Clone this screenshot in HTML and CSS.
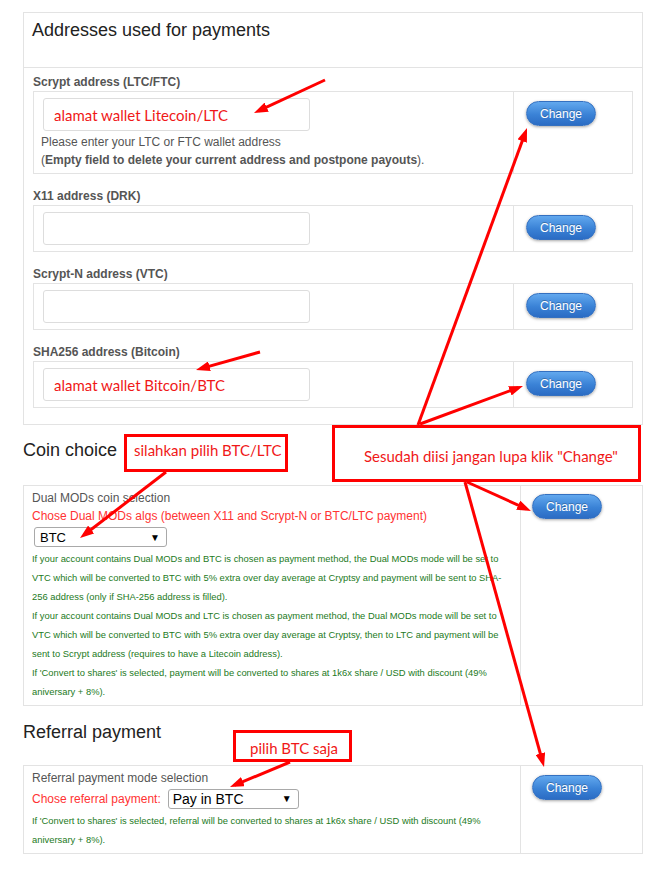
FILE: index.html
```html
<!DOCTYPE html>
<html lang="en">
<head>
    <meta charset="UTF-8">
    <title>Payment settings</title>
    <link rel="stylesheet" href="styles.css">
</head>
<body>
<div class="page">
    <div class="panel">
        <div class="panel-head"><h2>Addresses used for payments</h2></div>
        <div class="panel-body">
            <div class="addr-label">Scrypt address (LTC/FTC)</div>
            <div class="addr-row">
                <div class="addr-main">
                    <div class="addr-input"><span class="note-text">alamat wallet Litecoin/LTC</span></div>
                    <p class="addr-help">Please enter your LTC or FTC wallet address<br>(<b>Empty field to delete your current address and postpone payouts</b>).</p>
                </div>
                <div class="addr-side"><button class="btn-change">Change</button></div>
            </div>

            <div class="addr-label">X11 address (DRK)</div>
            <div class="addr-row">
                <div class="addr-main"><div class="addr-input"></div></div>
                <div class="addr-side"><button class="btn-change">Change</button></div>
            </div>

            <div class="addr-label">Scrypt-N address (VTC)</div>
            <div class="addr-row">
                <div class="addr-main"><div class="addr-input"></div></div>
                <div class="addr-side"><button class="btn-change">Change</button></div>
            </div>

            <div class="addr-label">SHA256 address (Bitcoin)</div>
            <div class="addr-row">
                <div class="addr-main"><div class="addr-input"><span class="note-text">alamat wallet Bitcoin/BTC</span></div></div>
                <div class="addr-side"><button class="btn-change">Change</button></div>
            </div>
        </div>
    </div>

    <h2 class="section-title">Coin choice</h2>
    <div class="choice-box">
        <div class="choice-main">
            <div class="choice-title">Dual MODs coin selection</div>
            <div class="choice-red">Chose Dual MODs algs (between X11 and Scrypt-N or BTC/LTC payment)</div>
            <div class="select select-coin"><span>BTC</span><span class="select-arrow">&#9660;</span></div>
            <div class="choice-notes">
                <p>If your account contains Dual MODs and BTC is chosen as payment method, the Dual MODs mode will be set to VTC which will be converted to BTC with 5% extra over day average at Cryptsy and payment will be sent to SHA-256 address (only if SHA-256 address is filled).</p>
                <p>If your account contains Dual MODs and LTC is chosen as payment method, the Dual MODs mode will be set to VTC which will be converted to BTC with 5% extra over day average at Cryptsy, then to LTC and payment will be sent to Scrypt address (requires to have a Litecoin address).</p>
                <p>If 'Convert to shares' is selected, payment will be converted to shares at 1k6x share / USD with discount (49% aniversary + 8%).</p>
            </div>
        </div>
        <div class="choice-side"><button class="btn-change">Change</button></div>
    </div>

    <h2 class="section-title section-ref">Referral payment</h2>
    <div class="choice-box">
        <div class="choice-main">
            <div class="choice-title">Referral payment mode selection</div>
            <div class="ref-row">
                <span class="choice-red">Chose referral payment:</span>
                <div class="select select-ref"><span>Pay in BTC</span><span class="select-arrow">&#9660;</span></div>
            </div>
            <div class="choice-notes ref-notes">
                <p>If 'Convert to shares' is selected, referral will be converted to shares at 1k6x share / USD with discount (49% aniversary + 8%).</p>
            </div>
        </div>
        <div class="choice-side ref-side"><button class="btn-change">Change</button></div>
    </div>

    <!-- red annotations drawn over the page -->
    <svg class="arrows" width="664" height="869" viewBox="0 0 664 869">
        <defs>
            <marker id="head" viewBox="0 0 14 10" refX="9" refY="5" markerWidth="14" markerHeight="10" orient="auto" markerUnits="userSpaceOnUse">
                <path d="M0 0 L14 5 L0 10 Z" fill="#f00"/>
            </marker>
        </defs>
        <g stroke="#f00" stroke-width="3" marker-end="url(#head)">
            <line x1="325" y1="80" x2="258.5" y2="110.9"/>
            <line x1="260" y1="352" x2="200.8" y2="368.6"/>
            <line x1="166" y1="472" x2="84" y2="535"/>
            <line x1="418" y1="425" x2="525.3" y2="132.7"/>
            <line x1="420" y1="424" x2="518.3" y2="387.7"/>
            <line x1="467" y1="482" x2="526.4" y2="508.9"/>
            <line x1="465" y1="482" x2="542.7" y2="762.2"/>
            <line x1="290" y1="762" x2="234.6" y2="785.1"/>
        </g>
    </svg>
    <div class="note-box note-coin">silahkan pilih BTC/LTC</div>
    <div class="note-box note-change">Sesudah diisi jangan lupa klik "Change"</div>
    <div class="note-box note-ref">pilih BTC saja</div>
</div>
</body>
</html>
```

FILE: styles.css
```css
body {
    margin: 0;
    font-family: "Liberation Sans", Arial, sans-serif;
    background: #fff;
    color: #333;
}
.page {
    position: relative;
    width: 664px;
    height: 869px;
    padding: 12px 21px 0 23px;
    box-sizing: border-box;
    overflow: hidden;
}

/* addresses panel */
.panel {
    border: 1px solid #e3e3e3;
}
.panel-head {
    height: 55px;
    box-sizing: border-box;
    padding: 7px 8px 0;
    border-bottom: 1px solid #e3e3e3;
}
.panel-head h2 {
    margin: 0;
    font-size: 18px;
    line-height: 20px;
    font-weight: normal;
    color: #222;
}
.panel-body {
    padding: 5px 9px 16px;
}
.addr-label {
    margin-top: 13px;
    font-size: 12px;
    line-height: 18px;
    font-weight: bold;
    color: #555;
}
.addr-label:first-child {
    margin-top: 0;
}
.addr-row {
    display: flex;
    border: 1px solid #e3e3e3;
}
.addr-main {
    flex: 1;
    padding: 6px 9px;
}
.addr-input {
    width: 267px;
    height: 33px;
    box-sizing: border-box;
    border: 1px solid #ddd;
    border-radius: 3px;
    padding: 0 10px;
    display: flex;
    align-items: center;
}
.note-text {
    font-family: Lato, "Open Sans", sans-serif;
    font-size: 15px;
    color: #f01818;
}
.addr-help {
    margin: 2px 0 -2px -2px;
    font-size: 12px;
    line-height: 18px;
    color: #555;
}
.addr-side {
    width: 119px;
    box-sizing: border-box;
    border-left: 1px solid #e3e3e3;
    padding: 9px 0 0 12px;
}

/* change button */
.btn-change {
    width: 70px;
    height: 25px;
    padding: 0;
    border: 1px solid #3470c0;
    border-radius: 13px;
    background: linear-gradient(to bottom, #62a8ee, #3a82d6 55%, #2b6cc4);
    box-shadow: 0 1px 3px rgba(0, 0, 0, 0.35);
    color: #fff;
    font-family: "Liberation Sans", Arial, sans-serif;
    font-size: 12px;
    text-shadow: 0 -1px 0 rgba(0, 0, 0, 0.25);
    cursor: pointer;
}

/* coin choice + referral */
.section-title {
    margin: 15px 0 25px;
    font-size: 18px;
    line-height: 20px;
    font-weight: normal;
    color: #222;
}
.section-ref {
    margin: 16px 0 23px;
}
.choice-box {
    display: flex;
    border: 1px solid #e3e3e3;
}
.choice-main {
    flex: 1;
    padding: 3px 8px 4px;
}
.choice-side {
    width: 122px;
    box-sizing: border-box;
    border-left: 1px solid #e3e3e3;
    padding: 8px 0 0 11px;
}
.ref-side {
    padding-top: 9px;
}
.choice-title {
    font-size: 12px;
    line-height: 18px;
    color: #555;
}
.choice-red {
    font-size: 12px;
    line-height: 18px;
    color: #f33;
}
.select {
    box-sizing: border-box;
    border: 1px solid #a9a9a9;
    border-radius: 3px;
    display: flex;
    justify-content: space-between;
    align-items: center;
    color: #000;
}
.select-coin {
    width: 133px;
    height: 20px;
    margin: 2px 0 0 2px;
    padding: 0 6px 0 5px;
    font-size: 13px;
}
.select-ref {
    width: 131px;
    height: 20px;
    padding: 0 6px 0 4px;
    font-size: 14px;
}
.select-arrow {
    font-size: 10px;
}
.ref-row {
    display: flex;
    align-items: center;
    gap: 7px;
    height: 23px;
}
.choice-notes {
    margin-top: 2px;
}
.ref-notes {
    margin-top: 1px;
}
.choice-notes p {
    margin: 0;
    font-size: 9.4px;
    line-height: 19px;
    color: #237a23;
}

/* annotations */
.arrows {
    position: absolute;
    top: 0;
    left: 0;
    pointer-events: none;
}
.note-box {
    position: absolute;
    box-sizing: border-box;
    border: 3px solid #f00;
    background: #fff;
    font-family: Lato, "Open Sans", sans-serif;
    font-size: 15px;
    color: #f01818;
    white-space: nowrap;
}
.note-coin {
    left: 124px;
    top: 434px;
    width: 164px;
    height: 38px;
    padding: 4px 0 0 7px;
}
.note-change {
    left: 332px;
    top: 425px;
    width: 309px;
    height: 57px;
    padding: 19px 0 0 29px;
}
.note-ref {
    left: 233px;
    top: 730px;
    width: 119px;
    height: 32px;
    padding: 6px 0 0 14px;
}
```
